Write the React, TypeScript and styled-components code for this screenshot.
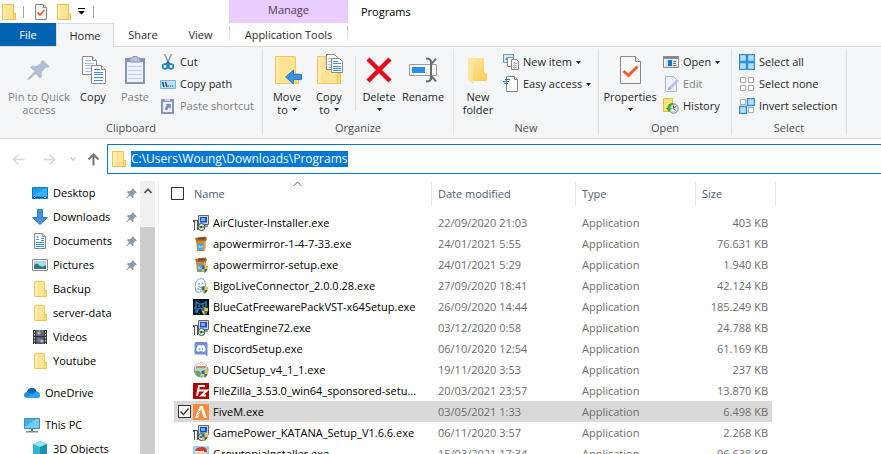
import React, { useEffect, useRef } from "react";
import styled, { createGlobalStyle } from "styled-components";
import { FaDiscord } from "react-icons/fa";

const GlobalStyle = createGlobalStyle`
  *, *::before, *::after { box-sizing: border-box; }
  body {
    margin: 0;
    background: #fff;
    color: #000;
    font: 11px/16px "Open Sans", "Noto Sans", sans-serif;
  }
  button, input { font: inherit; color: inherit; }
  svg { display: block; flex: none; }
`;

/* ---------- layout ---------- */

const Window = styled.div`
  display: flex;
  flex-direction: column;
  height: 100vh;
  overflow: hidden;
`;

const TitleBar = styled.header`
  display: flex;
  height: 23px;
`;

const QuickAccess = styled.div`
  display: flex;
  align-items: center;
  width: 229px;
  padding-left: 2px;
`;

const PlainButton = styled.button`
  display: flex;
  padding: 0;
  border: 0;
  background: none;
`;

const QuickButton = styled(PlainButton)<{ $gap?: number }>`
  margin-right: ${(p) => p.$gap ?? 0}px;
`;

const QuickDivider = styled.span<{ $gap?: number }>`
  width: 1px;
  height: 12px;
  margin-right: ${(p) => p.$gap ?? 0}px;
  background: #a5a5a5;
`;

const ContextTitle = styled.div`
  width: 119px;
  padding-top: 2px;
  background: #ebccff;
  color: #4b3d55;
  text-align: center;
`;

const WindowTitle = styled.h1`
  margin: 0;
  padding: 4px 0 0 13px;
  font-size: 11px;
  font-weight: 400;
`;

const TabRow = styled.nav`
  display: flex;
  align-items: flex-start;
  height: 24px;
  box-shadow: inset 0 -1px #dadbdc;
`;

const Tab = styled.button<{ $kind?: "file" | "active" | "context"; $width: number }>`
  width: ${(p) => p.$width}px;
  height: ${(p) => (p.$kind === "active" ? 24 : 23)}px;
  padding: 0;
  border: 0 solid #dadbdc;
  border-width: ${(p) => (p.$kind === "active" ? "1px 1px 0" : "0")};
  background: ${(p) =>
    p.$kind === "file"
      ? "#0063b1"
      : p.$kind === "active"
        ? "#f5f6f7"
        : p.$kind === "context"
          ? "linear-gradient(#c8c8c8, #fff) left / 1px 18px no-repeat, linear-gradient(#c8c8c8, #fff) right / 1px 18px no-repeat"
          : "none"};
  color: ${(p) => (p.$kind === "file" ? "#fff" : "#2b2b2b")};
`;

const Ribbon = styled.section`
  display: flex;
  height: 92px;
  padding-top: 2px;
  border-bottom: 1px solid #dadbdc;
  background: #f5f6f7;
`;

const Group = styled.div<{ $pad: number; $end: number }>`
  display: flex;
  flex-direction: column;
  justify-content: space-between;
  height: 86px;
  border-right: 1px solid #e2e3e4;
  & > :first-child {
    padding: 0 ${(p) => p.$end}px 0 ${(p) => p.$pad}px;
  }
`;

const GroupBody = styled.div`
  display: flex;
`;

const GroupLabel = styled.div`
  height: 14px;
  color: #4f4f4f;
  line-height: 14px;
  text-align: center;
`;

const BigButton = styled.button<{ $width: number }>`
  display: flex;
  flex-direction: column;
  align-items: center;
  width: ${(p) => p.$width}px;
  height: 68px;
  padding: 5px 0 0;
  border: 0;
  background: none;
  color: #262626;
  line-height: 13px;
  white-space: nowrap;
  &:disabled { color: #7e7e7e; }
`;

const BigLabel = styled.span`
  margin-top: 4px;
`;

const LabelLine = styled.span`
  display: flex;
  align-items: center;
  justify-content: center;
  gap: 4px;
  height: 13px;
`;

const InnerDivider = styled.span`
  width: 1px;
  height: 55px;
  margin: 7px 2px 0 5px;
  background: #dcdddf;
`;

const SmallList = styled.div<{ $width: number; $gap?: number }>`
  display: flex;
  flex-direction: column;
  width: ${(p) => p.$width}px;
  margin-left: ${(p) => p.$gap ?? 0}px;
  padding-top: 2px;
`;

const SmallButton = styled.button`
  display: flex;
  align-items: center;
  gap: 4px;
  height: 22px;
  padding: 0;
  border: 0;
  background: none;
  color: #262626;
  white-space: nowrap;
  &:disabled { color: #7e7e7e; }
`;

const AddressRow = styled.div`
  display: flex;
  flex: none;
  align-items: center;
  padding: 5px 0 7px 12px;
`;

const NavButton = styled(PlainButton)<{ $gap: number }>`
  margin-right: ${(p) => p.$gap}px;
`;

const AddressBox = styled.label`
  display: flex;
  flex: 1;
  align-items: center;
  gap: 5px;
  height: 30px;
  padding-left: 4px;
  border: 1px solid #0078d7;
  border-right: 0;
`;

const AddressInput = styled.input`
  flex: 1;
  padding: 0;
  border: 0;
  outline: 0;
  font-size: 12px;
  line-height: 16px;
  &::selection { background: #0078d7; color: #fff; }
`;

const Content = styled.main`
  display: flex;
  flex: 1;
  min-height: 0;
`;

const Sidebar = styled.nav`
  width: 140px;
  overflow: hidden;
`;

const SideItem = styled.a<{ $level: number; $spaced?: boolean }>`
  display: flex;
  align-items: center;
  gap: 5px;
  height: 24px;
  margin-top: ${(p) => (p.$spaced ? 8 : 0)}px;
  padding: 0 3px 0 ${(p) => 16 + p.$level * 8}px;
  color: #000;
  text-decoration: none;
`;

const SideLabel = styled.span`
  flex: 1;
  white-space: nowrap;
`;

const Scrollbar = styled.div`
  display: flex;
  flex-direction: column;
  width: 15px;
  background: #f0f0f0;
`;

const ScrollUp = styled(PlainButton)`
  justify-content: center;
  height: 46px;
  padding-top: 7px;
`;

const ScrollThumb = styled.div`
  flex: 1;
  background: #cdcdcd;
`;

const FilePane = styled.section`
  flex: 1;
  margin-left: 3px;
  padding-left: 12px;
  border-left: 1px solid #f0f0f0;
  overflow: hidden;
`;

const FileTable = styled.table`
  width: 605px;
  border-collapse: separate;
  border-spacing: 0;
  table-layout: fixed;
`;

const HeadCell = styled.th`
  padding: 0 0 6px;
  color: #4c607a;
  font-weight: 400;
  text-align: left;
`;

const HeadInner = styled.div<{ $first?: boolean }>`
  position: relative;
  display: flex;
  align-items: center;
  gap: 10px;
  height: 25px;
  padding-left: ${(p) => (p.$first ? 0 : 6)}px;
  border-right: 1px solid #e5e5e5;
`;

const SortMark = styled.svg`
  position: absolute;
  top: 0;
  right: 129px;
`;

const Check = styled.input`
  flex: none;
  width: 13px;
  height: 13px;
  margin: 0;
  border: 1px solid #333;
  background: #fff;
  appearance: none;
  &:checked {
    background: #fff
      url("data:image/svg+xml,%3Csvg xmlns='http://www.w3.org/2000/svg' viewBox='0 0 11 11'%3E%3Cpath d='M1.5 5.5l3 3 5-6' fill='none' stroke='%23333' stroke-width='1.3'/%3E%3C/svg%3E");
  }
`;

const FileRow = styled.tr<{ $selected?: boolean }>`
  & > td { background-color: ${(p) => (p.$selected ? "#d9d9d9" : "transparent")}; }
`;

const Cell = styled.td<{ $end?: boolean }>`
  height: 21px;
  padding: 0 ${(p) => (p.$end ? 4 : 0)}px 0 6px;
  border-right: ${(p) => (p.$end ? 4 : 0)}px solid transparent;
  background-clip: padding-box;
  color: #6d6d6d;
  text-align: ${(p) => (p.$end ? "right" : "left")};
  white-space: nowrap;
`;

const NameCell = styled(Cell)`
  padding: 0 6px 0 4px;
  border-left: 3px solid transparent;
  color: #000;
`;

const NameInner = styled.label`
  display: flex;
  align-items: center;
  height: 21px;
`;

const CheckSlot = styled.span`
  display: flex;
  flex: none;
  width: 15px;
`;

const FileName = styled.span`
  margin-left: 4px;
  overflow: hidden;
  text-overflow: ellipsis;
`;

/* ---------- drawings ---------- */

const Folder = () => (
  <svg width="14" height="16" viewBox="0 0 14 16">
    <path d="M.5.5h11v9h2v6H.5z" fill="#ffe597" stroke="#e8c353" />
    <path d="M1 1h2v14H1z" fill="#ffeeb8" />
    <path d="M11.5 9.5v4l-1 2h3v-6z" fill="#ffdf80" stroke="#e8c353" />
  </svg>
);

const FolderSlot = () => (
  <svg width="16" height="16" viewBox="0 0 16 16">
    <path d="M2.5.5h10v9h2v6h-12z" fill="#ffe597" stroke="#ecc95e" />
    <path d="M3 1h2v14H3z" fill="#ffeeb8" />
    <path d="M12.5 9.5v4l-1 2h3v-6z" fill="#ffdf80" stroke="#ecc95e" />
  </svg>
);

const CheckedPage = () => (
  <svg width="12" height="16" viewBox="0 0 12 16">
    <path d="M.5.5h8l3 3v12H.5z" fill="#fafafa" stroke="#858585" />
    <path d="M8.5.5v3h3" fill="#ddd" stroke="#858585" />
    <path d="M2.5 8.5l2.500 2.500 4.500-5" fill="none" stroke="#f15a22" strokeWidth="1.800" />
  </svg>
);

const Caret = () => (
  <svg width="5" height="3" viewBox="0 0 5 3">
    <path d="M0 0h5L2.500 3z" fill="#1e1e1e" />
  </svg>
);

const Customize = () => (
  <svg width="8" height="7" viewBox="0 0 8 7">
    <path d="M0 0h7v1H0zM0 3h7L3.500 6.500z" fill="#000" />
  </svg>
);

const PinBig = () => (
  <svg width="32" height="32" viewBox="0 0 32 32">
    <path d="M20 6l6.500 6.500-2 1.500-1.500-.5-4.500 4.500.5 4.500-2 2-4.500-4.500L6 26l-1.500-.5.5-1.500 6.500-6.500-4.500-4 2-2 4.500.5L18 9l-.5-1.500z" fill="#b2bdcf" />
  </svg>
);

const Page = ({ x, y, blue = "#3f8fe0" }: { x: number; y: number; blue?: string }) => (
  <g transform={`translate(${x} ${y})`}>
    <path d="M.5.5h10l4 4v14H.5z" fill="#fff" stroke="#8a8a8a" />
    <path d="M10.5.5v4h4" fill="#eee" stroke="#8a8a8a" />
    <path d="M3 4.500h6M3 7.500h9M3 9.500h9M3 12.500h9M3 15.500h9" stroke={blue} />
  </g>
);

const CopyBig = () => (
  <svg width="32" height="32" viewBox="0 0 32 32">
    <Page x={5} y={2} blue="#9fc6f0" />
    <Page x={14} y={11} />
  </svg>
);

const PasteBig = () => (
  <svg width="32" height="32" viewBox="0 0 32 32">
    <path d="M6 4h20v26H6z" fill="#8495b8" />
    <path d="M8 8h16v20H8z" fill="#eef2fa" />
    <path d="M9 12.500h14M9 16.500h14M9 20.500h14M9 24.500h14" stroke="#c5cfe3" />
    <path d="M11 8V4h3V2.500h4V4h3v4z" fill="#b8c4da" stroke="#8495b8" />
  </svg>
);

const BigFolderBody = () => (
  <>
    <path d="M4.500 2.500h20v17h3v10h-23z" fill="#ffe394" stroke="#efc95c" />
    <path d="M5 3h3v26H5z" fill="#ffeab0" />
    <path d="M24.500 19.500v8l-1.500 2h4.500v-10z" fill="#ffd76b" stroke="#efc95c" />
  </>
);

const MoveBig = () => (
  <svg width="32" height="32" viewBox="0 0 32 32">
    <BigFolderBody />
    <path d="M14.500 23l8-7v4.500h8v5h-8V30z" fill="#3995e3" stroke="#2a7fcd" />
  </svg>
);

const CopyToBig = () => (
  <svg width="32" height="32" viewBox="0 0 32 32">
    <BigFolderBody />
    <path d="M13.5.5h8l3 3v12h-11z" fill="#fff" stroke="#8a8a8a" />
    <path d="M15 4.500h4M15 7.500h4M15 10.500h4M15 13.500h4" stroke="#9fc6f0" />
    <path d="M18.500 4.500h8l3 3v11h-11z" fill="#fff" stroke="#8a8a8a" />
    <path d="M20 7.500h5M20 9.500h8M20 12.500h8M20 14.500h8M20 16.500h8" stroke="#3f8fe0" />
  </svg>
);

const DeleteBig = () => (
  <svg width="32" height="32" viewBox="0 0 32 32">
    <path d="M5 5l22 22M27 5l-22 22" stroke="#e30b17" strokeWidth="4.500" />
  </svg>
);

const RenameBig = () => (
  <svg width="32" height="32" viewBox="0 0 32 32">
    <path d="M2.500 10.500h27v11h-27z" fill="#fafafa" stroke="#9b9b9b" />
    <path d="M5 13h13v6H5z" fill="#2f8fe5" />
    <path d="M19 4.500q5 0 5 3.500t5-3.500M19 27.500q5 0 5-3.500t5 3.500M24 7v19" fill="none" stroke="#6b6b6b" strokeWidth="2" />
  </svg>
);

const NewFolderBig = () => (
  <svg width="32" height="32" viewBox="0 0 32 32">
    <defs>
      <linearGradient id="nf" x1="0" y1="0" x2="1" y2="1">
        <stop offset="0" stopColor="#ffebac" />
        <stop offset="1" stopColor="#f6c948" />
      </linearGradient>
    </defs>
    <path d="M6 4h16v14l3 3v6H9l-3-3z" fill="url(#nf)" />
    <path d="M6 4l5 3v23l-5-4z" fill="#ffe39a" />
    <path d="M22 18l3 2v7h-3z" fill="#f9d366" />
  </svg>
);

const PropertiesBig = () => (
  <svg width="32" height="32" viewBox="0 0 32 32">
    <path d="M6.500 2.500h15l5 5v22h-20z" fill="#f8f8f8" stroke="#8a8a8a" />
    <path d="M21.500 2.500v5h5" fill="#dcdcdc" stroke="#8a8a8a" />
    <path d="M9.500 17l5 4.500 9-9" fill="none" stroke="#f2622a" strokeWidth="3" />
  </svg>
);

const Small = ({ children }: { children: React.ReactNode }) => (
  <svg width="16" height="16" viewBox="0 0 16 16">{children}</svg>
);

const CutIcon = () => (
  <Small>
    <path d="M4.500 0l5 11M11.500 0l-5 11" stroke="#8a96a3" strokeWidth="1.500" />
    <circle cx="5" cy="12.500" r="2.300" fill="#fff" stroke="#1c83c7" strokeWidth="1.800" />
    <circle cx="11" cy="12.500" r="2.300" fill="#fff" stroke="#1c83c7" strokeWidth="1.800" />
    <path d="M6 10l2-2 2 2" fill="none" stroke="#15699f" strokeWidth="1.500" />
  </Small>
);

const CopyPathIcon = () => (
  <Small>
    <path d="M.5 4.500h15v8H.5z" fill="#b9e1fb" stroke="#6fb5e5" />
    <path d="M2.500 6l1.500 5M5.500 6L7 11" stroke="#1d2b36" strokeWidth="1.200" />
    <path d="M8 9.500h1v1H8zM10 9.500h1v1h-1zM12 9.500h1v1h-1z" fill="#1d2b36" />
  </Small>
);

const PasteShortcutIcon = () => (
  <Small>
    <path d="M1.500 1.500h12v14h-12z" fill="#8b9bbd" stroke="#8091b5" />
    <path d="M3 4h9v10H3z" fill="#e9eef8" />
    <path d="M5 3V1h5v2z" fill="#c9d3e6" />
    <path d="M5 12q0-4 2-4.500L5.500 6H11v5L9.500 9.500Q7.500 9.500 7.500 12z" fill="#7d90b7" />
  </Small>
);

const NewItemIcon = () => (
  <Small>
    <path d="M.5.5h10v8H.5z" fill="#d8edf8" stroke="#5c9dbd" />
    <path d="M2 6l2-3 2 2 1-1 2 2z" fill="#3d87aa" />
    <path d="M4.500 3.500h5l2 2v7h-7z" fill="#fff" stroke="#8a8a8a" />
    <path d="M8.500 5.500h5l2 2v8h-7z" fill="#fff" stroke="#8a8a8a" />
    <path d="M10 9.500h4M10 11.500h4M10 13.500h4" stroke="#a5bfdc" />
    <path d="M11.500 8v7" stroke="#e8b3a8" />
  </Small>
);

const EasyAccessIcon = () => (
  <Small>
    <path d="M3.5.5h8l3 3v12h-11z" fill="#fbfbfb" stroke="#858585" />
    <path d="M11.5.5v3h3" fill="#e2e2e2" stroke="#858585" />
    <path d="M2 3.500h5M0 5.500h6M1 7.500h4" stroke="#2274bd" />
  </Small>
);

const OpenIcon = () => (
  <Small>
    <path d="M.5 2.500h15v11H.5z" fill="#fff" stroke="#8a8a8a" />
    <path d="M0 2h16v3H0z" fill="#8a8a8a" />
    <path d="M2 6h12v7H2z" fill="#e3e3e3" />
    <path d="M5 6h4v6H5z" fill="#0078d7" />
    <path d="M10 7.500h3M10 9.500h3M10 11.500h3" stroke="#777" />
  </Small>
);

const EditIcon = () => (
  <Small>
    <path d="M2.5.5h8l3 3v12h-11z" fill="#edf2fb" stroke="#a5b7d3" />
    <path d="M5 14l1-3 8-8 2 2-8 8z" fill="#b7c7e0" />
    <path d="M5 14l1-3 2 2z" fill="#8fa6ca" />
  </Small>
);

const HistoryIcon = () => (
  <Small>
    <path d="M.5.5h9v13h-9z" fill="#ffe180" stroke="#e6bc3d" />
    <circle cx="10.500" cy="10.500" r="4.700" fill="#dfe3e6" stroke="#7b8288" />
    <path d="M10.500 7.500v3l2.500-2M10.500 10.500l2 2" fill="none" stroke="#555" />
    <path d="M10 5Q4.500 5 4.500 10H2.500l3.500 4 3-4H7.500q0-3 2.500-3z" fill="#3dab35" />
  </Small>
);

const tiles = [[0, 0], [8, 0], [0, 8], [8, 8]];

const SelectIcon = ({ on }: { on: number[] }) => (
  <Small>
    {tiles.map(([x, y], i) =>
      on.includes(i) ? (
        <path key={i} d={`M${x + 0.5} ${y + 0.5}h7v7h-7z`} fill="#b8defa" stroke="#2e90dc" strokeWidth="1.500" />
      ) : (
        <path key={i} d={`M${x + 1.5} ${y + 1.5}h5v5h-5z`} fill="#fff" stroke="#a8a8a8" />
      )
    )}
  </Small>
);

const Arrow = ({ dir, color }: { dir: "left" | "right" | "up"; color: string }) => {
  const d = {
    left: "M12.500 6.500H1.500M6.500 1.500l-5 5 5 5",
    right: "M.5 6.500h11M6.500 1.500l5 5-5 5",
    up: "M6.500 12.500V1.500M1.500 6.500l5-5 5 5",
  }[dir];
  return (
    <svg width="13" height="13" viewBox="0 0 13 13">
      <path d={d} fill="none" stroke={color} strokeWidth={dir === "up" ? 2 : 1.5} />
    </svg>
  );
};

const SmallPin = () => (
  <svg width="11" height="11" viewBox="0 0 11 11">
    <path d="M6.500 0L11 4.500l-1.500.5-2 2L7.500 9l-1 1L4 7.500.5 10.500 0 10l3-3.500L1 4l1-1 2 .2 2-2z" fill="#8d9cab" />
  </svg>
);

const DesktopIcon = () => (
  <Small>
    <path d="M.5 2.500h15v11H.5z" fill="#1c9bf0" stroke="#0f75c2" />
    <path d="M1 11L13 3h2v8z" fill="#3aaefb" />
    <path d="M1 12.500h14" stroke="#0b5fa3" />
    <path d="M2 12.500h1M12 12.500h2" stroke="#fff" />
  </Small>
);

const DownloadIcon = () => (
  <Small>
    <path d="M5.5.5h5v8h5L8 15.500.5 8.500h5z" fill="#3c92dc" stroke="#2d7fc8" />
  </Small>
);

const DocumentIcon = () => (
  <Small>
    <path d="M2.5.5h8l3 3v12h-11z" fill="#fff" stroke="#868686" />
    <path d="M10.5.5v3h3" fill="#ddd" stroke="#868686" />
    <path d="M4 6.500h3M9 5.500h3M9 7.500h3M4 9.500h8M4 11.500h8M4 13.500h8" stroke="#3693d6" />
    <path d="M4 4l1.500-1.500L7 5z" fill="#3693d6" />
  </Small>
);

const PictureIcon = () => (
  <Small>
    <path d="M.5 2.500h15v11H.5z" fill="#fff" stroke="#8c8c8c" />
    <path d="M2 4h12v8H2z" fill="#aad9f4" />
    <path d="M2 8q3-3 5 0t7 0v4H2z" fill="#39786d" />
    <path d="M2 10.500h12V12H2z" fill="#3a6ea5" />
  </Small>
);

const VideoIcon = () => (
  <Small>
    <path d="M1 1h14v14H1z" fill="#333" />
    <path d="M4 1h8v6H4z" fill="#456fb5" />
    <path d="M4 8h8v7H4z" fill="#3561a8" />
    <path d="M2.500 2v13M13.500 2v13" stroke="#f2f2f2" strokeDasharray="1.500 1.500" />
    <circle cx="7" cy="4" r="1.800" fill="#e1b33e" />
    <circle cx="10" cy="5" r="1.500" fill="#a9432f" />
    <circle cx="7" cy="11" r="1.800" fill="#d36a34" />
    <circle cx="10" cy="12" r="1.600" fill="#dfc04f" />
  </Small>
);

const CloudIcon = () => (
  <Small>
    <path d="M4 13q-4 0-4-3 0-2.500 3-3 1-4 5-4 3.500 0 4.500 3.500Q16 7 16 10t-3 3z" fill="#1490df" />
    <path d="M3 7q1-4 5-4 3.500 0 4.500 3.500L8 9z" fill="#0364b8" />
    <path d="M2 12.500L12 7q4 .5 4 3.200T13 13H4z" fill="#28a8ea" />
  </Small>
);

const ComputerIcon = () => (
  <Small>
    <path d="M.5 1.500h15v10H.5z" fill="#3fb0ea" stroke="#4b8cb3" />
    <path d="M1 10L12 2h3v9H1z" fill="#74cdf7" />
    <path d="M7 12h2v2H7zM2 14h12v1.500H2z" fill="#6c8ea3" />
  </Small>
);

const CubeIcon = () => (
  <Small>
    <path d="M8 0l7 3v10l-7 3-7-3V3z" fill="#2fb6cf" />
    <path d="M8 0l7 3-7 3-7-3z" fill="#96e6f1" />
    <path d="M8 6l7-3v10l-7 3z" fill="#1b93b0" />
  </Small>
);

const Shield = () => (
  <g>
    <path d="M8.500 9q1.500 0 3-1 1.500 1 3.500 1 .5 4.500-3.500 7-3.500-2.500-3-7z" fill="#f7c02e" />
    <path d="M8.500 9q1.500 0 3-1v4H8.700zM11.500 12h3q-.8 2.600-3 4z" fill="#1c6bc0" />
  </g>
);

const InstallerIcon = ({ shield }: { shield?: boolean }) => (
  <Small>
    <path d="M5.5.5h10v9h-10z" fill="#d4d4d4" stroke="#666" />
    <path d="M7 2h7v5.500H7z" fill="#1748d8" />
    <path d="M8 3h4v3H8z" fill="#62b8f2" />
    <path d="M5 10h10v2H5z" fill="#9c9c9c" />
    <path d="M0 5h5v10H1V7H0z" fill="#555" />
    <path d="M2 6h2v9H2z" fill="#eee" />
    <circle cx="8.500" cy="12" r="3.500" fill="#e8f2e2" stroke="#444" />
    <path d="M8.500 12L6 10l1 4zM8.500 12l3-1v2.500z" fill="#21c452" />
    <circle cx="8.500" cy="12" r="1" fill="#222" />
    {shield && <Shield />}
  </Small>
);

const BoxIcon = ({ shield }: { shield?: boolean }) => (
  <Small>
    <path d="M3 4h10l-1 11H4z" fill="#c48a45" />
    <path d="M2 2l5-1 6-.5 1 2.500-1 2H3z" fill="#a76f32" />
    <path d="M5 2l7-.5v2H5z" fill="#6f4a22" />
    <path d="M11 5h2l-1 10h-1.500z" fill="#e0aa62" />
    <path d="M5 8h5v6H5z" fill="#31a8df" />
    <path d="M6 12.500v-3l1.500 2 1.500-2v3" fill="none" stroke="#d6f0fb" strokeWidth=".8" />
    {shield && <Shield />}
  </Small>
);

const BigoIcon = () => (
  <Small>
    <path d="M3 12Q1 9 3 4q1-3.500 5-3.500T12 4q1 4 0 8-5 3-9 0z" fill="#f3fbfb" stroke="#8fb9bb" />
    <path d="M5 6q1-1 2 0M8.500 6q1-1 2 0M5.500 8.500q2.500 2 4 0" fill="none" stroke="#5a8d90" />
    <path d="M2 12q3-3 6 0l-1 3q-4 0-5-3z" fill="#d5eeee" stroke="#8fb9bb" />
    <Shield />
  </Small>
);

const BlueCatIcon = () => (
  <Small>
    <path d="M0 0h16v16H0z" fill="#07121d" />
    <path d="M3 14V3l3 2h4l3-2v5M3 9H1M5 14q-2-4 3-5" fill="none" stroke="#1681c8" strokeWidth="1.500" />
    <path d="M5 7h2M9 7h2" stroke="#44b6f2" />
    <Shield />
  </Small>
);

const DiscordIcon = () => (
  <Small>
    <path d="M3 1h10q1.500 0 1.500 1.500V15.500L12 13.500H3q-1.500 0-1.500-1.500V2.500Q1.500 1 3 1z" fill="#7289da" />
    <FaDiscord x="3" y="2.500" size={10} color="#fff" />
  </Small>
);

const DucIcon = () => (
  <Small>
    <circle cx="8" cy="8" r="7" fill="#b9cfc9" stroke="#7d9690" />
    <path d="M1.500 6Q8 2 14.500 6 13 1 8 1T1.500 6z" fill="#f5f1e8" />
    <path d="M3 5h10" stroke="#d06c55" strokeWidth="1.500" />
    <path d="M2 9q4-1 6 2l-1 4Q3 14 2 9z" fill="#5fa563" />
    <Shield />
  </Small>
);

const FileZillaIcon = () => (
  <Small>
    <path d="M0 0h16v16H0z" fill="#b30000" />
    <path d="M4 13L6 3h6M5 7.500h4M9 7.500h5L8.500 12.500H13" fill="none" stroke="#fff" strokeWidth="2" />
  </Small>
);

const FiveMIcon = () => (
  <Small>
    <path d="M0 0h16v16H0z" fill="#fb8b3c" />
    <path d="M7 2h2.500L14 14h-3L8.500 7 9 5.500 7.500 6.500 5 14H2z" fill="#fff" />
    <path d="M5 9l4-4M4 12l4-4" stroke="#fb8b3c" strokeWidth=".8" />
  </Small>
);

const GrowtopiaIcon = () => (
  <Small>
    <path d="M0 0h16v16H0z" fill="#9bd3ef" />
    <path d="M2 6q0-5 7-5 5 0 5 5z" fill="#d9382b" />
    <path d="M3 6h10v7H3z" fill="#f5c79b" />
    <path d="M2 5h9v1.500H2z" fill="#fff" />
    <path d="M5.500 8v2M10.500 8v2" stroke="#222" />
    <Shield />
  </Small>
);

/* ---------- data ---------- */

const files = [
  { name: "AirCluster-Installer.exe", date: "22/09/2020 21:03", size: "403 KB", icon: <InstallerIcon /> },
  { name: "apowermirror-1-4-7-33.exe", date: "24/01/2021 5:55", size: "76.631 KB", icon: <BoxIcon /> },
  { name: "apowermirror-setup.exe", date: "24/01/2021 5:29", size: "1.940 KB", icon: <BoxIcon shield /> },
  { name: "BigoLiveConnector_2.0.0.28.exe", date: "27/09/2020 18:41", size: "42.124 KB", icon: <BigoIcon /> },
  { name: "BlueCatFreewarePackVST-x64Setup.exe", date: "26/09/2020 14:44", size: "185.249 KB", icon: <BlueCatIcon /> },
  { name: "CheatEngine72.exe", date: "03/12/2020 0:58", size: "24.788 KB", icon: <InstallerIcon /> },
  { name: "DiscordSetup.exe", date: "06/10/2020 12:54", size: "61.169 KB", icon: <DiscordIcon /> },
  { name: "DUCSetup_v4_1_1.exe", date: "19/11/2020 3:53", size: "237 KB", icon: <DucIcon /> },
  { name: "FileZilla_3.53.0_win64_sponsored-setu...", date: "20/03/2021 23:57", size: "13.870 KB", icon: <FileZillaIcon /> },
  { name: "FiveM.exe", date: "03/05/2021 1:33", size: "6.498 KB", icon: <FiveMIcon />, selected: true },
  { name: "GamePower_KATANA_Setup_V1.6.6.exe", date: "06/11/2020 3:57", size: "2.268 KB", icon: <InstallerIcon shield /> },
  { name: "GrowtopiaInstaller.exe", date: "15/03/2021 17:34", size: "96.638 KB", icon: <GrowtopiaIcon /> },
];

const places = [
  { name: "Desktop", icon: <DesktopIcon />, level: 2, pinned: true },
  { name: "Downloads", icon: <DownloadIcon />, level: 2, pinned: true },
  { name: "Documents", icon: <DocumentIcon />, level: 2, pinned: true },
  { name: "Pictures", icon: <PictureIcon />, level: 2, pinned: true },
  { name: "Backup", icon: <FolderSlot />, level: 2 },
  { name: "server-data", icon: <FolderSlot />, level: 2 },
  { name: "Videos", icon: <VideoIcon />, level: 2 },
  { name: "Youtube", icon: <FolderSlot />, level: 2 },
  { name: "OneDrive", icon: <CloudIcon />, level: 1, spaced: true },
  { name: "This PC", icon: <ComputerIcon />, level: 1, spaced: true },
  { name: "3D Objects", icon: <CubeIcon />, level: 2 },
];

/* ---------- parts ---------- */

type BigProps = {
  icon: React.ReactNode;
  lines: string[];
  width: number;
  menu?: boolean;
  disabled?: boolean;
};

const Big = ({ icon, lines, width, menu, disabled }: BigProps) => (
  <BigButton $width={width} disabled={disabled}>
    {icon}
    <BigLabel>
      {lines.map((line, i) => (
        <LabelLine key={i}>
          {line}
          {menu && i === lines.length - 1 && <Caret />}
        </LabelLine>
      ))}
    </BigLabel>
  </BigButton>
);

type CommandProps = { icon: React.ReactNode; text: string; menu?: boolean; disabled?: boolean };

const Command = ({ icon, text, menu, disabled }: CommandProps) => (
  <SmallButton disabled={disabled}>
    {icon}
    {text}
    {menu && <Caret />}
  </SmallButton>
);

export default function App() {
  const address = useRef<HTMLInputElement>(null);

  useEffect(() => {
    address.current?.focus();
    address.current?.select();
  }, []);

  return (
    <Window>
      <GlobalStyle />
      <TitleBar>
        <QuickAccess>
          <QuickButton $gap={7} aria-label="Folder"><Folder /></QuickButton>
          <QuickDivider $gap={11} />
          <QuickButton $gap={10} aria-label="Properties"><CheckedPage /></QuickButton>
          <QuickButton $gap={7} aria-label="New folder"><Folder /></QuickButton>
          <QuickButton $gap={7} aria-label="Customize toolbar"><Customize /></QuickButton>
          <QuickDivider />
        </QuickAccess>
        <ContextTitle>Manage</ContextTitle>
        <WindowTitle>Programs</WindowTitle>
      </TitleBar>

      <TabRow>
        <Tab $kind="file" $width={56}>File</Tab>
        <Tab $kind="active" $width={58}>Home</Tab>
        <Tab $width={58}>Share</Tab>
        <Tab $width={57}>View</Tab>
        <Tab $kind="context" $width={119}>Application Tools</Tab>
      </TabRow>

      <Ribbon>
        <Group $pad={7} $end={0}>
          <GroupBody>
            <Big icon={<PinBig />} lines={["Pin to Quick", "access"]} width={64} disabled />
            <Big icon={<CopyBig />} lines={["Copy"]} width={44} />
            <Big icon={<PasteBig />} lines={["Paste"]} width={40} disabled />
            <SmallList $width={102} $gap={5}>
              <Command icon={<CutIcon />} text="Cut" />
              <Command icon={<CopyPathIcon />} text="Copy path" />
              <Command icon={<PasteShortcutIcon />} text="Paste shortcut" disabled />
            </SmallList>
          </GroupBody>
          <GroupLabel>Clipboard</GroupLabel>
        </Group>
        <Group $pad={3} $end={7}>
          <GroupBody>
            <Big icon={<MoveBig />} lines={["Move", "to"]} width={42} menu />
            <Big icon={<CopyToBig />} lines={["Copy", "to"]} width={42} menu />
            <InnerDivider />
            <Big icon={<DeleteBig />} lines={["Delete", ""]} width={42} menu />
            <Big icon={<RenameBig />} lines={["Rename"]} width={46} />
          </GroupBody>
          <GroupLabel>Organize</GroupLabel>
        </Group>
        <Group $pad={4} $end={0}>
          <GroupBody>
            <Big icon={<NewFolderBig />} lines={["New", "folder"]} width={40} />
            <SmallList $width={95} $gap={5}>
              <Command icon={<NewItemIcon />} text="New item" menu />
              <Command icon={<EasyAccessIcon />} text="Easy access" menu />
            </SmallList>
          </GroupBody>
          <GroupLabel>New</GroupLabel>
        </Group>
        <Group $pad={4} $end={0}>
          <GroupBody>
            <Big icon={<PropertiesBig />} lines={["Properties", ""]} width={54} menu />
            <SmallList $width={68} $gap={6}>
              <Command icon={<OpenIcon />} text="Open" menu />
              <Command icon={<EditIcon />} text="Edit" disabled />
              <Command icon={<HistoryIcon />} text="History" />
            </SmallList>
          </GroupBody>
          <GroupLabel>Open</GroupLabel>
        </Group>
        <Group $pad={7} $end={0}>
          <GroupBody>
            <SmallList $width={107}>
              <Command icon={<SelectIcon on={[0, 1, 2, 3]} />} text="Select all" />
              <Command icon={<SelectIcon on={[]} />} text="Select none" />
              <Command icon={<SelectIcon on={[1, 2]} />} text="Invert selection" />
            </SmallList>
          </GroupBody>
          <GroupLabel>Select</GroupLabel>
        </Group>
      </Ribbon>

      <AddressRow>
        <NavButton $gap={18} aria-label="Back"><Arrow dir="left" color="#d8d8d8" /></NavButton>
        <NavButton $gap={14} aria-label="Forward"><Arrow dir="right" color="#d8d8d8" /></NavButton>
        <NavButton $gap={11} aria-label="Recent locations">
          <svg width="6" height="4" viewBox="0 0 6 4">
            <path d="M.5.5L3 3 5.5.5" fill="none" stroke="#ccc" strokeWidth="1.500" />
          </svg>
        </NavButton>
        <NavButton $gap={7} aria-label="Up"><Arrow dir="up" color="#757575" /></NavButton>
        <AddressBox>
          <Folder />
          <AddressInput
            ref={address}
            aria-label="Address"
            spellCheck={false}
            defaultValue="C:\Users\Woung\Downloads\Programs"
          />
        </AddressBox>
      </AddressRow>

      <Content>
        <Sidebar>
          {places.map((p) => (
            <SideItem key={p.name} href="#" $level={p.level} $spaced={p.spaced}>
              {p.icon}
              <SideLabel>{p.name}</SideLabel>
              {p.pinned && <SmallPin />}
            </SideItem>
          ))}
        </Sidebar>
        <Scrollbar>
          <ScrollUp aria-label="Scroll up">
            <svg width="8" height="6" viewBox="0 0 8 6">
              <path d="M.5 5L4 1.500 7.500 5" fill="none" stroke="#505050" strokeWidth="1.700" />
            </svg>
          </ScrollUp>
          <ScrollThumb />
        </Scrollbar>
        <FilePane>
          <FileTable>
            <colgroup>
              <col width="261" />
              <col width="144" />
              <col width="120" />
              <col width="80" />
            </colgroup>
            <thead>
              <tr>
                <HeadCell>
                  <HeadInner $first>
                    <Check type="checkbox" aria-label="Select all files" />
                    Name
                    <SortMark width="9" height="6" viewBox="0 0 9 6">
                      <path d="M.5 5l4-4 4 4" fill="none" stroke="#6d6d6d" />
                    </SortMark>
                  </HeadInner>
                </HeadCell>
                <HeadCell><HeadInner>Date modified</HeadInner></HeadCell>
                <HeadCell><HeadInner>Type</HeadInner></HeadCell>
                <HeadCell><HeadInner>Size</HeadInner></HeadCell>
              </tr>
            </thead>
            <tbody>
              {files.map((f) => (
                <FileRow key={f.name} $selected={f.selected}>
                  <NameCell>
                    <NameInner>
                      <CheckSlot>
                        {f.selected && <Check type="checkbox" defaultChecked />}
                      </CheckSlot>
                      {f.icon}
                      <FileName>{f.name}</FileName>
                    </NameInner>
                  </NameCell>
                  <Cell>{f.date}</Cell>
                  <Cell>Application</Cell>
                  <Cell $end>{f.size}</Cell>
                </FileRow>
              ))}
            </tbody>
          </FileTable>
        </FilePane>
      </Content>
    </Window>
  );
}
